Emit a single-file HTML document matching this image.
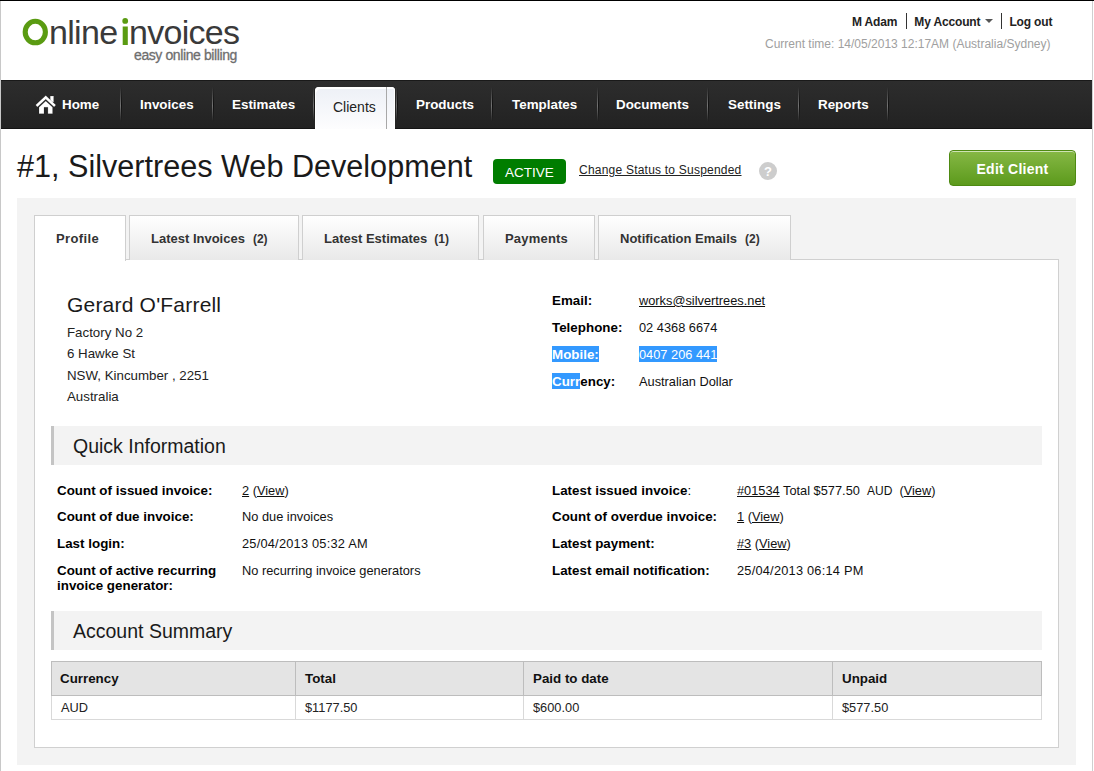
<!DOCTYPE html>
<html>
<head>
<meta charset="utf-8">
<style>
*{box-sizing:border-box;}
html,body{margin:0;padding:0;}
body{width:1094px;height:771px;overflow:hidden;position:relative;background:#fff;font-family:"Liberation Sans",sans-serif;color:#222;font-size:13px;}
.abs{position:absolute;}
#topline{left:0;top:0;width:1094px;height:1px;background:#000;}
#lline{left:0;top:1px;width:1px;height:770px;background:#c8c8c8;}
#rline{left:1092px;top:1px;width:1px;height:770px;background:#cfcfcf;}

/* logo */
#logo{left:21px;top:12px;width:230px;height:40px;font-size:34px;letter-spacing:-0.7px;color:#3a3a3a;white-space:nowrap;line-height:40px;}
#logo span{position:absolute;top:0;}
#logo .b{font-size:36px;letter-spacing:0;-webkit-text-stroke:1.5px #5a9b12;}
#logo .g{color:#5a9b12;}
#tag{left:134px;top:47px;font-size:14px;color:#6e6e6e;white-space:nowrap;letter-spacing:-0.4px;-webkit-text-stroke:.3px #6e6e6e;}

#toplinks{left:852px;top:14px;font-size:12px;letter-spacing:-0.15px;font-weight:bold;color:#222;white-space:nowrap;line-height:16px;}
#toplinks .sep{display:inline-block;width:1px;height:16px;background:#333;vertical-align:top;margin:0 7px 0 9px;position:relative;top:-1px;}
#caret{display:inline-block;width:0;height:0;border-left:4px solid transparent;border-right:4px solid transparent;border-top:4px solid #555;vertical-align:middle;margin-left:5px;margin-right:-1px;position:relative;top:-2px;}
#time{left:765px;top:37px;font-size:12px;color:#a0a0a0;white-space:nowrap;}

/* nav */
#nav{left:1px;top:80px;width:1091px;height:49px;background:linear-gradient(#2d2d2d,#222);border-top:1px solid #191919;border-bottom:1px solid #141414;}
.ni{position:absolute;top:0;height:47px;color:#fff;font-weight:bold;font-size:13.4px;line-height:48px;white-space:nowrap;}
.sepn{position:absolute;top:6px;width:2px;height:35px;}
.sepn:before{content:"";position:absolute;left:0;top:0;width:1px;height:34px;background:linear-gradient(rgba(140,140,140,0),rgba(140,140,140,.75) 55%,rgba(140,140,140,0));}
.sepn:after{content:"";position:absolute;left:1px;top:0;width:1px;height:35px;background:linear-gradient(rgba(0,0,0,0),rgba(0,0,0,.6) 50%,rgba(0,0,0,0));}
#clients{position:absolute;left:314px;top:6px;width:80px;height:42px;border-radius:4px 4px 0 0;background:linear-gradient(#edf0f6,#fdfdfe);box-shadow:inset 2px 3px 0 -1px #fff, inset -1px 0 0 #fff;}
#clients .t{position:absolute;left:18px;top:12px;color:#222;font-weight:normal;font-size:14px;line-height:16px;}
#clients .v{position:absolute;left:71px;top:0;width:1px;height:42px;background:#a8a8a8;}

/* title */
#title{left:17px;top:148px;font-size:30.6px;color:#1a1a1a;white-space:nowrap;line-height:36px;}
#active{left:493px;top:159px;width:73px;height:25px;background:#007d00;border-radius:4px;color:#fff;font-size:13.5px;line-height:27px;text-align:center;}
#chg{left:579px;top:163px;font-size:12px;letter-spacing:0.22px;color:#222;text-decoration:underline;white-space:nowrap;line-height:15px;}
#help{left:759px;top:162px;width:18px;height:18px;border-radius:50%;background:#cdcdcd;color:#fff;font-weight:bold;font-size:13px;line-height:20px;text-align:center;}
#edit{left:949px;top:150px;width:127px;height:36px;border:1px solid #4e8a12;border-radius:4px;background:linear-gradient(#86b845,#5c9a1c);box-shadow:inset 0 1px 0 rgba(255,255,255,.6);color:#fff;font-weight:bold;font-size:14px;line-height:36px;text-align:center;letter-spacing:0.25px;}

/* panel */
#panel{left:17px;top:198px;width:1059px;height:567px;background:#f3f3f3;}
.tab{position:absolute;top:215px;height:45px;border:1px solid #cfcfcf;border-bottom:none;background:linear-gradient(#fff,#e9e9e9);font-weight:bold;font-size:13px;letter-spacing:0;color:#333;padding-left:21px;line-height:16px;padding-top:15px;white-space:nowrap;}
.tab small{font-size:12px;font-weight:bold;margin-left:7px;letter-spacing:0;}
#content{left:34px;top:259px;width:1025px;height:489px;background:#fff;border:1px solid #d0d0d0;}
#tabprofile{background:#fff;height:46px;z-index:2;}

.name{left:67px;top:293px;font-size:21px;letter-spacing:0.2px;color:#1a1a1a;white-space:nowrap;line-height:24px;}
.addr{position:absolute;left:67px;font-size:13.3px;color:#222;white-space:nowrap;line-height:15px;}
.lbl{position:absolute;font-weight:bold;font-size:13.35px;letter-spacing:0.02px;color:#000;white-space:nowrap;line-height:15px;}
.val{position:absolute;font-size:12.8px;color:#111;white-space:nowrap;line-height:15px;}
.val u,.lnk{text-decoration:underline;}
.sel{background:#3399ff;color:#fff;padding-top:1px;}
.sech{position:absolute;left:51px;width:991px;height:39px;background:#f3f3f3;border-left:3px solid #c4c4c4;}
.sech div{position:absolute;left:19px;top:9px;font-size:19.5px;color:#1a1a1a;line-height:22px;white-space:nowrap;}
#acct{position:absolute;left:51px;top:661px;width:991px;border-collapse:collapse;font-size:13px;}
#acct th{background:#e4e4e4;border:1px solid #bdbdbd;text-align:left;font-weight:bold;height:34px;padding:0 0 0 9px;color:#111;font-size:13.35px;}
#acct th:first-child{padding-left:8px;}
#acct td{border:1px solid #d9d9d9;height:24px;padding:0 0 0 9px;font-size:12.8px;color:#222;}
</style>
</head>
<body>
<div id="topline" class="abs"></div>
<div id="lline" class="abs"></div>
<div id="rline" class="abs"></div>

<div id="logo" class="abs"><svg style="position:absolute;left:0;top:0" width="30" height="40"><ellipse cx="14.3" cy="20.05" rx="10.1" ry="10.75" fill="none" stroke="#5a9b12" stroke-width="5.1"/></svg><span style="left:28px">nline</span><svg style="position:absolute;left:100px;top:0" width="10" height="40"><circle cx="4.2" cy="8.9" r="2.9" fill="#5a9b12"/><rect x="1.7" y="14.5" width="5.1" height="18.5" fill="#5a9b12"/></svg><span style="left:108px">nvoices</span></div>
<div id="tag" class="abs">easy online billing</div>

<div id="toplinks" class="abs">M Adam<span class="sep"></span>My Account<span id="caret"></span><span class="sep"></span>Log out</div>
<div id="time" class="abs">Current time: 14/05/2013 12:17AM (Australia/Sydney)</div>

<div id="nav" class="abs">
  <svg style="position:absolute;left:34px;top:14px" width="22" height="20" viewBox="0 0 22 20">
    <g fill="#fff" stroke="#000" stroke-opacity=".3" stroke-width=".5">
      <rect x="15.2" y="1" width="3.5" height="6"/>
      <path d="M0.6 9.9 L10.75 0.5 L20.9 9.9 L19.1 11.9 L10.75 4.3 L2.4 11.9 Z"/>
      <path d="M4 12.2 L10.75 6 L17.6 12.2 L17.6 18.7 L12.9 18.7 L12.9 12.3 L9 12.3 L9 18.7 L4 18.7 Z"/>
    </g>
  </svg>
  <div class="ni" style="left:61px">Home</div>
  <div class="sepn" style="left:119px"></div>
  <div class="ni" style="left:139px">Invoices</div>
  <div class="sepn" style="left:211px"></div>
  <div class="ni" style="left:231px">Estimates</div>
  <div class="sepn" style="left:312px"></div><div class="sepn" style="left:395px"></div>
  <div id="clients"><div class="t">Clients</div><div class="v"></div></div>
  <div class="ni" style="left:415px">Products</div>
  <div class="sepn" style="left:490px"></div>
  <div class="ni" style="left:511px">Templates</div>
  <div class="sepn" style="left:596px"></div>
  <div class="ni" style="left:615px">Documents</div>
  <div class="sepn" style="left:706px"></div>
  <div class="ni" style="left:727px">Settings</div>
  <div class="sepn" style="left:797px"></div>
  <div class="ni" style="left:817px">Reports</div>
  <div class="sepn" style="left:886px"></div>
</div>

<div id="title" class="abs">#1, Silvertrees Web Development</div>
<div id="active" class="abs">ACTIVE</div>
<div id="chg" class="abs">Change Status to Suspended</div>
<div id="help" class="abs">?</div>
<div id="edit" class="abs">Edit Client</div>

<div id="panel" class="abs"></div>
<div id="content" class="abs"></div>
<div id="tabprofile" class="tab" style="left:34px;width:92px;letter-spacing:0.4px">Profile</div>
<div class="tab" style="left:129px;width:170px;">Latest Invoices<small style="margin-left:8px">(2)</small></div>
<div class="tab" style="left:302px;width:177px;">Latest Estimates<small>(1)</small></div>
<div class="tab" style="left:483px;width:112px;letter-spacing:0.2px">Payments</div>
<div class="tab" style="left:598px;width:193px;">Notification Emails<small style="margin-left:8px">(2)</small></div>


<div class="name abs">Gerard O'Farrell</div>
<div class="addr" style="top:325px">Factory No 2</div>
<div class="addr" style="top:346px">6 Hawke St</div>
<div class="addr" style="top:368px">NSW, Kincumber , 2251</div>
<div class="addr" style="top:389px">Australia</div>

<div class="lbl" style="left:552px;top:293px">Email:</div>
<div class="val" style="left:639px;top:293px"><u>works@silvertrees.net</u></div>
<div class="lbl" style="left:552px;top:320px">Telephone:</div>
<div class="val" style="left:639px;top:320px">02 4368 6674</div>
<div class="lbl" style="left:552px;top:347px"><span class="sel">Mobile:</span></div>
<div class="val" style="left:639px;top:347px"><span class="sel">0407 206 441</span></div>
<div class="lbl" style="left:552px;top:374px"><span class="sel">Curr</span>ency:</div>
<div class="val" style="left:639px;top:374px">Australian Dollar</div>

<div class="sech" style="top:426px"><div>Quick Information</div></div>

<div class="lbl" style="left:57px;top:483px">Count of issued invoice:</div>
<div class="val" style="left:242px;top:483px"><u>2</u> (<u>View</u>)</div>
<div class="lbl" style="left:57px;top:509px">Count of due invoice:</div>
<div class="val" style="left:242px;top:509px">No due invoices</div>
<div class="lbl" style="left:57px;top:536px">Last login:</div>
<div class="val" style="left:242px;top:536px;letter-spacing:0.22px">25/04/2013 05:32 AM</div>
<div class="lbl" style="left:57px;top:563px">Count of active recurring<br>invoice generator:</div>
<div class="val" style="left:242px;top:563px">No recurring invoice generators</div>

<div class="lbl" style="left:552px;top:483px">Latest issued invoice<span style="font-weight:normal">:</span></div>
<div class="val" style="left:737px;top:483px"><u>#01534</u> Total $577.50 &nbsp;<span style="font-size:12px">AUD</span> &nbsp;(<u>View</u>)</div>
<div class="lbl" style="left:552px;top:509px">Count of overdue invoice:</div>
<div class="val" style="left:737px;top:509px"><u>1</u> (<u>View</u>)</div>
<div class="lbl" style="left:552px;top:536px">Latest payment:</div>
<div class="val" style="left:737px;top:536px"><u>#3</u> (<u>View</u>)</div>
<div class="lbl" style="left:552px;top:563px">Latest email notification:</div>
<div class="val" style="left:737px;top:563px;letter-spacing:0.22px">25/04/2013 06:14 PM</div>

<div class="sech" style="top:611px"><div>Account Summary</div></div>

<table id="acct">
<tr><th style="width:244px">Currency</th><th style="width:228px">Total</th><th style="width:309px">Paid to date</th><th>Unpaid</th></tr>
<tr><td>AUD</td><td>$1177.50</td><td>$600.00</td><td>$577.50</td></tr>
</table>
</body>
</html>
